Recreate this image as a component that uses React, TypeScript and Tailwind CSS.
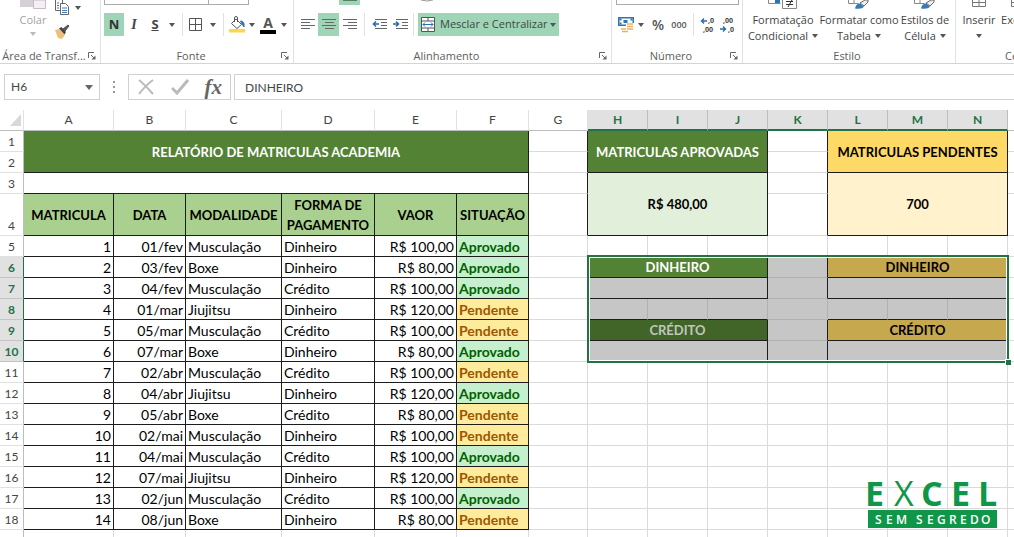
import * as React from "react"
import clsx from "clsx"

interface Enrollment {
  id: number
  date: string
  course: string
  payment: string
  value: string
  status: "Aprovado" | "Pendente"
}

interface SideCell {
  text?: string
  colSpan?: number
  rowSpan?: number
  className?: string
  selected?: boolean
}

const enrollments: Enrollment[] = [
  { id: 1, date: "01/fev", course: "Musculação", payment: "Dinheiro", value: "R$ 100,00", status: "Aprovado" },
  { id: 2, date: "03/fev", course: "Boxe", payment: "Dinheiro", value: "R$ 80,00", status: "Aprovado" },
  { id: 3, date: "04/fev", course: "Musculação", payment: "Crédito", value: "R$ 100,00", status: "Aprovado" },
  { id: 4, date: "01/mar", course: "Jiujitsu", payment: "Dinheiro", value: "R$ 120,00", status: "Pendente" },
  { id: 5, date: "05/mar", course: "Musculação", payment: "Crédito", value: "R$ 100,00", status: "Pendente" },
  { id: 6, date: "07/mar", course: "Boxe", payment: "Dinheiro", value: "R$ 80,00", status: "Aprovado" },
  { id: 7, date: "02/abr", course: "Musculação", payment: "Crédito", value: "R$ 100,00", status: "Pendente" },
  { id: 8, date: "04/abr", course: "Jiujitsu", payment: "Dinheiro", value: "R$ 120,00", status: "Aprovado" },
  { id: 9, date: "05/abr", course: "Boxe", payment: "Crédito", value: "R$ 80,00", status: "Pendente" },
  { id: 10, date: "02/mai", course: "Musculação", payment: "Dinheiro", value: "R$ 100,00", status: "Pendente" },
  { id: 11, date: "04/mai", course: "Musculação", payment: "Crédito", value: "R$ 100,00", status: "Aprovado" },
  { id: 12, date: "07/mai", course: "Jiujitsu", payment: "Dinheiro", value: "R$ 120,00", status: "Pendente" },
  { id: 13, date: "02/jun", course: "Musculação", payment: "Crédito", value: "R$ 100,00", status: "Aprovado" },
  { id: 14, date: "08/jun", course: "Boxe", payment: "Dinheiro", value: "R$ 80,00", status: "Pendente" },
]

const columns = ["A", "B", "C", "D", "E", "F", "G", "H", "I", "J", "K", "L", "M", "N"]
const tableHeads = ["MATRICULA", "DATA", "MODALIDADE", "FORMA DE PAGAMENTO", "VAOR", "SITUAÇÃO"]

const GRID = "border-r border-b border-[#dadada]"
const BOX = "border-r border-b border-[#1c1c1c]"
const ENTRY = "border-r border-b border-[#1c1c1c] p-0 align-bottom leading-[18px] whitespace-nowrap"
const SHADED = "border-r border-b border-[#b1b1b1] bg-[#c6c6c6]"

const blankRow: SideCell[] = Array.from({ length: 7 }, () => ({ className: GRID }))
const gapCell: SideCell = { className: "border-r border-b border-b-[#dadada] border-r-[#1c1c1c]" }
const shadedGap: SideCell = { className: "border-r border-b border-b-[#b1b1b1] border-r-[#1c1c1c] bg-[#c6c6c6]" }
const shadedBox: SideCell = { colSpan: 3, className: "border-r border-b border-[#1c1c1c] bg-[#c6c6c6]" }
const shadedEdge = "border-r border-b border-b-[#1c1c1c] border-r-[#b1b1b1] bg-[#c6c6c6]"

// columns H to N, keyed by row number
const sideCells: Record<number, SideCell[]> = {
  1: [
    { text: "MATRICULAS APROVADAS", colSpan: 3, rowSpan: 2, className: clsx(BOX, "bg-[#548235] text-white") },
    gapCell,
    { text: "MATRICULAS PENDENTES", colSpan: 3, rowSpan: 2, className: clsx(BOX, "bg-[#ffd966]") },
  ],
  2: [gapCell],
  3: [
    { text: "R$ 480,00", colSpan: 3, rowSpan: 2, className: clsx(BOX, "bg-[#e2efda]") },
    gapCell,
    { text: "700", colSpan: 3, rowSpan: 2, className: clsx(BOX, "bg-[#fff2cc]") },
  ],
  4: [gapCell],
  6: [
    { text: "DINHEIRO", colSpan: 3, selected: true, className: clsx(BOX, "bg-[#548235] text-white") },
    shadedGap,
    { text: "DINHEIRO", colSpan: 3, className: clsx(BOX, "bg-[#c6a84f]") },
  ],
  7: [shadedBox, shadedGap, shadedBox],
  8: [
    { className: shadedEdge },
    { className: shadedEdge },
    { className: shadedEdge },
    { className: SHADED },
    { className: shadedEdge },
    { className: shadedEdge },
    { className: shadedEdge },
  ],
  9: [
    { text: "CRÉDITO", colSpan: 3, className: clsx(BOX, "bg-[#416529] text-[#c0c6bb]") },
    shadedGap,
    { text: "CRÉDITO", colSpan: 3, className: clsx(BOX, "bg-[#c6a84f]") },
  ],
  10: [shadedBox, shadedGap, shadedBox],
}

function Caret({ className }: { className?: string }) {
  return (
    <svg viewBox="0 0 6 4" className={clsx("h-[4px] w-[6px] shrink-0", className)} fill="#555">
      <path d="M0 0h6L3 4z" />
    </svg>
  )
}

function CaretButton({ label }: { label: string }) {
  return (
    <button aria-label={label} className="flex h-[23px] w-3 items-center justify-center">
      <Caret />
    </button>
  )
}

function ToolDivider() {
  return <span className="h-[23px] w-px shrink-0 bg-[#e1e1e1]" />
}

function Launcher({ label }: { label: string }) {
  return (
    <button aria-label={label} className="shrink-0">
      <svg viewBox="0 0 8 8" className="h-2 w-2" fill="none" stroke="#666">
        <path d="M.5 6V.5H6M3 3l3 3" />
        <path d="M7.500 3.500v4h-4z" fill="#666" stroke="none" />
      </svg>
    </button>
  )
}

interface GroupProps {
  title: string
  launcher?: boolean
  className: string
  children: React.ReactNode
}

function Group({ title, launcher, className, children }: GroupProps) {
  return (
    <section className={clsx("flex h-[63px] flex-col border-r border-[#e1e1e1]", className)}>
      <div className="h-12 shrink-0">{children}</div>
      <div className="flex h-[15px] items-center pr-1 text-[11px] leading-[15px] text-[#5e5e5e]">
        <span className="flex-1 text-center whitespace-nowrap">{title}</span>
        {launcher && <Launcher label={`Opções de ${title}`} />}
      </div>
    </section>
  )
}

function AlignIcon({ lines }: { lines: string }) {
  return (
    <svg viewBox="0 0 14 12" className="h-3 w-[14px]" stroke="#666" fill="none">
      <path d={lines} />
    </svg>
  )
}

function IndentIcon({ increase }: { increase?: boolean }) {
  return (
    <svg viewBox="0 0 16 12" className="h-3 w-4" fill="none">
      <path d="M3 .5h12M9 3.500h6M9 6.500h6M3 9.500h12" stroke="#666" />
      {increase ? (
        <path d="M0 5h5M3 2.500L5.500 5 3 7.500" stroke="#2a6bb0" strokeWidth="1.6" />
      ) : (
        <path d="M7 5H1.500M4 2.500L1.500 5 4 7.500" stroke="#2a6bb0" strokeWidth="1.6" />
      )}
    </svg>
  )
}

function ClipboardGroup() {
  return (
    <Group title="Área de Transf..." launcher className="w-[101px]">
      <div className="flex">
        <button className="ml-4 flex w-[34px] flex-col items-center text-[11px] leading-4 text-[#a3a3a3]">
          <svg viewBox="0 0 26 9" className="h-[9px] w-[26px]">
            <path d="M0 0h13v7H0z" fill="#d5d0d5" />
            <path d="M13.500 0h12v8.500h-12z" fill="#f5eff5" stroke="#c5bcc5" />
          </svg>
          <span className="mt-[3px]">Colar</span>
          <Caret className="mt-1 opacity-40" />
        </button>
        <div className="ml-1 flex flex-col">
          <div className="flex h-4 items-start">
            <button aria-label="Copiar">
              <svg viewBox="0 0 16 15" className="h-[15px] w-4" fill="#fff" stroke="#666">
                <path d="M1.500 0v10.500h7V0" />
                <path d="M6.500 3.500h5l3 3v8h-8z" />
                <path d="M3 3h2M3 5.500h2M3 8h2M8 8h5M8 10.500h5M8 12.500h5" stroke="#3b78b8" />
              </svg>
            </button>
            <button aria-label="Opções de cópia" className="flex h-4 w-4 items-center justify-center">
              <Caret />
            </button>
          </div>
          <button aria-label="Pincel de Formatação" className="mt-2 h-4 w-4">
            <svg viewBox="0 0 16 16" className="h-4 w-4">
              <path d="M1 6l4-1 6 6-3 4-4-1z" fill="#eebf76" />
              <path d="M5 4.500l2.500-1.500L12 8l-1.500 2.500z" fill="#444" />
              <path d="M9 5l5-4 1 1-4 5z" fill="#555" stroke="#555" />
            </svg>
          </button>
        </div>
      </div>
    </Group>
  )
}

function FontGroup() {
  return (
    <Group title="Fonte" launcher className="w-[193px]">
      <div className="flex pl-[3px]">
        <select aria-label="Fonte" className="h-[5px] w-[105px] appearance-none border border-t-0 border-[#ababab]" />
        <select aria-label="Tamanho" className="h-[5px] w-10 appearance-none border border-t-0 border-l-0 border-[#ababab]" />
      </div>
      <div className="mt-2 flex items-center pl-[3px]">
        <button className="h-[23px] w-5 bg-[#9fd5b7] text-[13px] font-bold text-[#333]">N</button>
        <button className="h-[23px] w-5 font-[Liberation_Serif,serif] text-[14px] font-bold text-[#444] italic">I</button>
        <button className="h-[23px] w-[22px] text-[13px] font-bold text-[#444] underline">S</button>
        <CaretButton label="Opções de sublinhado" />
        <span className="w-1" />
        <ToolDivider />
        <button aria-label="Bordas" className="flex w-6 justify-center">
          <svg viewBox="0 0 13 13" className="h-[13px] w-[13px]" fill="none" stroke="#555">
            <path d="M.5.5h12v12H.5zM6.500.5v12M.5 6.500h12" />
          </svg>
        </button>
        <CaretButton label="Opções de bordas" />
        <span className="w-1" />
        <ToolDivider />
        <button aria-label="Cor de Preenchimento" className="ml-1 flex w-[18px] justify-center">
          <svg viewBox="0 0 17 17" className="h-[17px] w-[17px]">
            <path d="M7 3l5.500 5.500-4.500 4L2.500 7.500z" fill="#fff" stroke="#555" />
            <path d="M5.500 6V2a1.500 1.500 0 0 1 3 0v4" fill="none" stroke="#555" />
            <path d="M11.500 5c3 0 4 2 3.500 6l-2-3z" fill="#2f75b5" stroke="#2f75b5" />
            <path d="M0 13h16v3.500H0z" fill="#ffd54a" />
          </svg>
        </button>
        <CaretButton label="Opções de preenchimento" />
        <button className="flex w-5 flex-col items-center text-[14px] leading-[14px] font-bold text-[#555]">
          A
          <span className="h-1 w-4 bg-black" />
        </button>
        <CaretButton label="Opções de cor da fonte" />
      </div>
    </Group>
  )
}

function AlignmentGroup() {
  return (
    <Group title="Alinhamento" launcher className="w-[318px]">
      <div className="flex h-[5px] items-start pl-[45px]">
        <button aria-label="Alinhar Embaixo" className="flex h-[5px] w-[21px] justify-center bg-[#9fd5b7]">
          <span className="h-px w-[14px] bg-[#5c7c69]" />
        </button>
        <svg viewBox="0 0 12 2" className="ml-[61px] h-[2px] w-3" fill="none" stroke="#999">
          <path d="M0 0q6 2 12 0" />
        </svg>
      </div>
      <div className="mt-2 flex items-center pl-1">
        <button aria-label="Alinhar à Esquerda" className="flex h-[23px] w-5 items-center justify-center">
          <AlignIcon lines="M0 .5h14M0 3.500h9M0 6.500h14M0 9.500h9" />
        </button>
        <button aria-label="Centralizar" className="flex h-[23px] w-[21px] items-center justify-center bg-[#9fd5b7]">
          <AlignIcon lines="M0 .5h14M3 3.500h9M0 6.500h14M3 9.500h9" />
        </button>
        <button aria-label="Alinhar à Direita" className="flex h-[23px] w-[21px] items-center justify-center">
          <AlignIcon lines="M0 .5h14M5 3.500h9M0 6.500h14M5 9.500h9" />
        </button>
        <span className="w-1" />
        <ToolDivider />
        <button aria-label="Diminuir Recuo" className="ml-1 flex w-[21px] justify-center">
          <IndentIcon />
        </button>
        <button aria-label="Aumentar Recuo" className="mr-0.5 flex w-[21px] justify-center">
          <IndentIcon increase />
        </button>
        <ToolDivider />
        <button className="ml-1 flex h-[23px] w-[141px] items-center bg-[#9fd5b7] px-[3px] text-[11px] whitespace-nowrap text-[#3a4a41]">
          <svg viewBox="0 0 15 15" className="mr-1 h-[15px] w-[15px] shrink-0" fill="none" stroke="#555">
            <path d="M.5.5h13v14H.5z" fill="#fff" />
            <path d="M.5 4h13M.5 11h13M7 .5V4M7 11v3.500" />
            <path d="M2 7.500h10M4 5.500l-2 2 2 2M10 5.500l2 2-2 2" stroke="#2a6bb0" />
          </svg>
          <span className="flex-1 text-left">Mesclar e Centralizar</span>
          <Caret />
        </button>
      </div>
    </Group>
  )
}

function NumberGroup() {
  return (
    <Group title="Número" launcher className="w-[131px]">
      <div className="flex pl-1">
        <select aria-label="Formato de Número" className="h-[5px] w-[123px] appearance-none border border-t-0 border-[#ababab]" />
      </div>
      <div className="mt-2 flex items-center pl-[6px]">
        <button aria-label="Formato de Contabilização" className="w-[17px]">
          <svg viewBox="0 0 17 16" className="h-4 w-[17px]">
            <path d="M0 0h16v9H0z" fill="#2f75b5" />
            <path d="M1.500 1.500h13v6h-13z" fill="#fff" />
            <path d="M1.500 1.500h2v2h-2zM12.500 1.500h2v2h-2zM1.500 5.500h2v2h-2zM5.500 3h4v3h-4z" fill="#2f75b5" />
            <path d="M8 6h8v8H8z" fill="#fff" />
            <path d="M9 7h6M9 9.500h6M9 12h6M3 12h5M4 14.500h6" stroke="#edb15c" strokeWidth="1.600" />
          </svg>
        </button>
        <CaretButton label="Opções de moeda" />
        <button className="w-[22px] text-[14px] font-semibold text-[#555]">%</button>
        <button className="w-5 text-[9px] font-semibold text-[#555]">000</button>
        <span className="w-1" />
        <ToolDivider />
        <button aria-label="Aumentar Casas Decimais" className="ml-[6px] w-5">
          <svg viewBox="0 0 16 18" className="h-[18px] w-4" fill="#444">
            <path d="M7 5H2M4 2.500L1.500 5 4 7.500" fill="none" stroke="#2a6bb0" strokeWidth="1.400" />
            <text x="8" y="7" fontSize="7" fontWeight="700">,0</text>
            <text x="3" y="16" fontSize="7" fontWeight="700">,00</text>
          </svg>
        </button>
        <button aria-label="Diminuir Casas Decimais" className="w-5">
          <svg viewBox="0 0 16 18" className="h-[18px] w-4" fill="#444">
            <path d="M0 13h5M3 10.500L5.500 13 3 15.500" fill="none" stroke="#2a6bb0" strokeWidth="1.400" />
            <text x="3" y="7" fontSize="7" fontWeight="700">,00</text>
            <text x="8" y="16" fontSize="7" fontWeight="700">,0</text>
          </svg>
        </button>
      </div>
    </Group>
  )
}

interface BigButtonProps {
  lines: string[]
  className: string
  children: React.ReactNode
}

function BigButton({ lines, className, children }: BigButtonProps) {
  return (
    <button className={clsx("flex shrink-0 flex-col items-center text-[11px] leading-4 whitespace-nowrap text-[#444]", className)}>
      <span className="flex h-3 items-start">{children}</span>
      <span>{lines[0]}</span>
      <span className="flex h-4 items-center gap-1">
        {lines[1]}
        <Caret />
      </span>
    </button>
  )
}

function PaintedTableIcon() {
  return (
    <svg viewBox="0 0 22 9" className="h-[9px] w-[22px]" fill="none" stroke="#888">
      <path d="M.5 0v3.500h10M6 0v3" />
      <path d="M12 3l5-3h3v2l-4 4z" fill="#eee" stroke="#666" />
      <path d="M7 8.500q1-5 5-5l4 3q-2 3-9 2z" fill="#3b78b8" stroke="none" />
    </svg>
  )
}

function StyleGroup() {
  return (
    <Group title="Estilo" className="w-[213px]">
      <div className="flex pl-1">
        <BigButton lines={["Formatação", "Condicional"]} className="w-[72px]">
          <svg viewBox="0 0 30 9" className="h-[9px] w-[30px]" fill="none" stroke="#888">
            <path d="M.5 0v3.500h12" />
            <path d="M7 0h5v3H7z" fill="#2f75b5" stroke="none" />
            <path d="M14.500 0v8.500h14V0" fill="#fff" />
            <path d="M18 1.500h7M18 4.500h7M24 0l-4 7" stroke="#333" />
          </svg>
        </BigButton>
        <BigButton lines={["Formatar como", "Tabela"]} className="w-20">
          <PaintedTableIcon />
        </BigButton>
        <BigButton lines={["Estilos de", "Célula"]} className="w-[52px]">
          <PaintedTableIcon />
        </BigButton>
      </div>
    </Group>
  )
}

function SmallTableIcon() {
  return (
    <svg viewBox="0 0 15 7" className="h-[7px] w-[15px]" fill="none" stroke="#777">
      <path d="M.5 0v6.500h13V0M7 0v6.500M.5 2.500h13" />
    </svg>
  )
}

function CellsGroup() {
  return (
    <Group title="Células" className="w-[140px]">
      <div className="flex pl-1">
        <BigButton lines={["Inserir", ""]} className="w-[38px]">
          <SmallTableIcon />
        </BigButton>
        <BigButton lines={["Excluir", ""]} className="w-10">
          <SmallTableIcon />
        </BigButton>
      </div>
    </Group>
  )
}

function Ribbon() {
  return (
    <header className="flex h-16 overflow-hidden border-b border-[#d4d4d4] [&>section]:shrink-0">
      <ClipboardGroup />
      <FontGroup />
      <AlignmentGroup />
      <NumberGroup />
      <StyleGroup />
      <CellsGroup />
    </header>
  )
}

function FormulaBar() {
  return (
    <div className="flex h-[46px] items-center pl-1 font-[Lato,sans-serif] text-[12px] text-[#444]">
      <div className="flex h-[26px] w-24 items-center border border-[#d0d0d0] pr-[6px]">
        <input aria-label="Caixa de Nome" defaultValue="H6" className="w-full min-w-0 pl-[6px] outline-none" />
        <button aria-label="Abrir lista de nomes">
          <svg viewBox="0 0 8 5" className="h-[5px] w-2" fill="#666">
            <path d="M0 0h8L4 5z" />
          </svg>
        </button>
      </div>
      <svg viewBox="0 0 2 12" className="mx-[13px] h-3 w-[2px]" fill="#999">
        <path d="M0 0h2v2H0zM0 5h2v2H0zM0 10h2v2H0z" />
      </svg>
      <div className="flex h-[26px] w-[103px] items-center justify-between border border-[#d0d0d0] px-2">
        <button aria-label="Cancelar">
          <svg viewBox="0 0 18 16" className="h-4 w-[18px]" fill="none" stroke="#bbb" strokeWidth="2">
            <path d="M2 1q6 5 14 14M16 1Q9 6 2 15" />
          </svg>
        </button>
        <button aria-label="Inserir">
          <svg viewBox="0 0 18 16" className="h-4 w-[18px]" fill="none" stroke="#bbb" strokeWidth="3">
            <path d="M1 9l5 5L17 1" />
          </svg>
        </button>
        <button className="font-[Liberation_Serif,serif] text-[21px] leading-6 font-bold text-[#666] italic">fx</button>
      </div>
      <input
        aria-label="Barra de Fórmulas"
        defaultValue="DINHEIRO"
        className="ml-[3px] h-[26px] min-w-0 flex-1 border border-r-0 border-[#d0d0d0] pl-[10px] outline-none"
      />
    </div>
  )
}

function ColumnHeads() {
  return (
    <tr className="h-[21px] text-[12px] text-[#444]">
      <th className="border-r border-b border-r-[#e1e1e1] border-b-[#bdbdbd] p-0">
        <svg viewBox="0 0 12 12" className="ml-auto h-3 w-[14px]" fill="#d8d8d8">
          <path d="M11 0v12H0z" />
        </svg>
      </th>
      {columns.map((name) => (
        <th
          key={name}
          scope="col"
          className={clsx(
            "border-r p-0 leading-[18px]",
            name >= "H"
              ? "border-b-2 border-r-[#bdbdbd] border-b-[#217346] bg-[#e1e1e1] font-bold text-[#217346]"
              : "border-b border-r-[#e1e1e1] border-b-[#bdbdbd] font-normal"
          )}
        >
          {name}
        </th>
      ))}
      <th className="border-b border-[#bdbdbd] p-0" />
    </tr>
  )
}

function SelectionFrame() {
  return (
    <div className="pointer-events-none absolute -top-0.5 -left-px h-[108px] w-[422px] border-2 border-[#217346]">
      <div className="h-full border border-white" />
      <span className="absolute -right-1 -bottom-1 h-[6px] w-[6px] border-t border-l border-white bg-[#217346]" />
    </div>
  )
}

function LeftCells({ row }: { row: number }) {
  if (row === 1) {
    return (
      <td colSpan={6} rowSpan={2} className={clsx(BOX, "bg-[#548235] p-0 text-center text-[13px] font-bold text-white")}>
        RELATÓRIO DE MATRICULAS ACADEMIA
      </td>
    )
  }
  if (row === 2) return null
  if (row === 3) return <td colSpan={6} className={clsx(BOX, "p-0")} />
  if (row === 4) {
    return tableHeads.map((head) => (
      <th key={head} scope="col" className={clsx(BOX, "bg-[#a9d08e] p-0 text-[13px] font-bold")}>
        {head}
      </th>
    ))
  }

  const item = enrollments[row - 5]
  if (!item) return columns.slice(0, 6).map((name) => <td key={name} className={clsx(GRID, "p-0")} />)

  return (
    <>
      <td className={clsx(ENTRY, "pr-[2px] text-right")}>{item.id}</td>
      <td className={clsx(ENTRY, "pr-[2px] text-right")}>{item.date}</td>
      <td className={clsx(ENTRY, "pl-[2px]")}>{item.course}</td>
      <td className={clsx(ENTRY, "pl-[2px]")}>{item.payment}</td>
      <td className={clsx(ENTRY, "pr-[2px] text-right")}>{item.value}</td>
      <td
        className={clsx(
          ENTRY,
          "pl-[2px] font-bold",
          item.status === "Aprovado" ? "bg-[#c6efce] text-[#006100]" : "bg-[#ffeb9c] text-[#9c5700]"
        )}
      >
        {item.status}
      </td>
    </>
  )
}

function SheetRow({ row }: { row: number }) {
  const active = row >= 6 && row <= 10
  const cells = sideCells[row] ?? blankRow

  return (
    <tr className={row === 4 ? "h-[42px]" : "h-[21px]"}>
      <th
        scope="row"
        className={clsx(
          "border-r border-b p-0 text-center align-bottom text-[12px] leading-[18px]",
          active
            ? "border-r-[#217346] border-b-[#c4c4c4] bg-[#e1e1e1] font-bold text-[#217346]"
            : "border-r-[#bdbdbd] border-b-[#e1e1e1] font-normal text-[#444]"
        )}
      >
        {row}
      </th>
      <LeftCells row={row} />
      <td className={clsx("border-r border-b border-b-[#dadada] p-0", row <= 4 ? "border-r-[#1c1c1c]" : "border-r-[#dadada]")} />
      {cells.map((cell, i) => (
        <td
          key={i}
          colSpan={cell.colSpan}
          rowSpan={cell.rowSpan}
          className={clsx("p-0 text-center text-[13px] font-bold", cell.selected && "relative", cell.className)}
        >
          {cell.text}
          {cell.selected && <SelectionFrame />}
        </td>
      ))}
      <td className="border-b border-[#dadada] p-0" />
    </tr>
  )
}

function Sheet() {
  return (
    <table className="w-full table-fixed border-separate border-spacing-0 font-[Lato,sans-serif] text-[14px] leading-5 text-black">
      <colgroup>
        <col className="w-6" />
        <col className="w-[90px]" />
        <col className="w-[72px]" />
        <col className="w-24" />
        <col className="w-[93px]" />
        <col className="w-[82px]" />
        <col className="w-[72px]" />
        <col className="w-[59px]" />
        {columns.slice(7).map((name) => (
          <col key={name} className="w-[60px]" />
        ))}
        <col />
      </colgroup>
      <thead>
        <ColumnHeads />
      </thead>
      <tbody>
        {Array.from({ length: 19 }, (_, i) => (
          <SheetRow key={i} row={i + 1} />
        ))}
      </tbody>
    </table>
  )
}

function Logo() {
  return (
    <svg viewBox="0 0 130 48" className="absolute right-4 bottom-2 h-12 w-[130px] overflow-visible" role="img" aria-label="Excel sem Segredo">
      <text y="25" x="-3 26 53 83 110" fontSize="34" fontWeight="700" fill="#109648">
        E<tspan fontWeight="400">X</tspan>CEL
      </text>
      <path d="M0 29h129v18H0z" fill="#109648" />
      <text y="43" x="7 18 28 40 48 59 69 81 92 102 113" fontSize="12" fontWeight="600" fill="#fff">
        SEM SEGREDO
      </text>
    </svg>
  )
}

export default function App() {
  return (
    <main className="relative h-screen overflow-hidden bg-white font-['Open_Sans',sans-serif]">
      <Ribbon />
      <FormulaBar />
      <Sheet />
      <Logo />
    </main>
  )
}
